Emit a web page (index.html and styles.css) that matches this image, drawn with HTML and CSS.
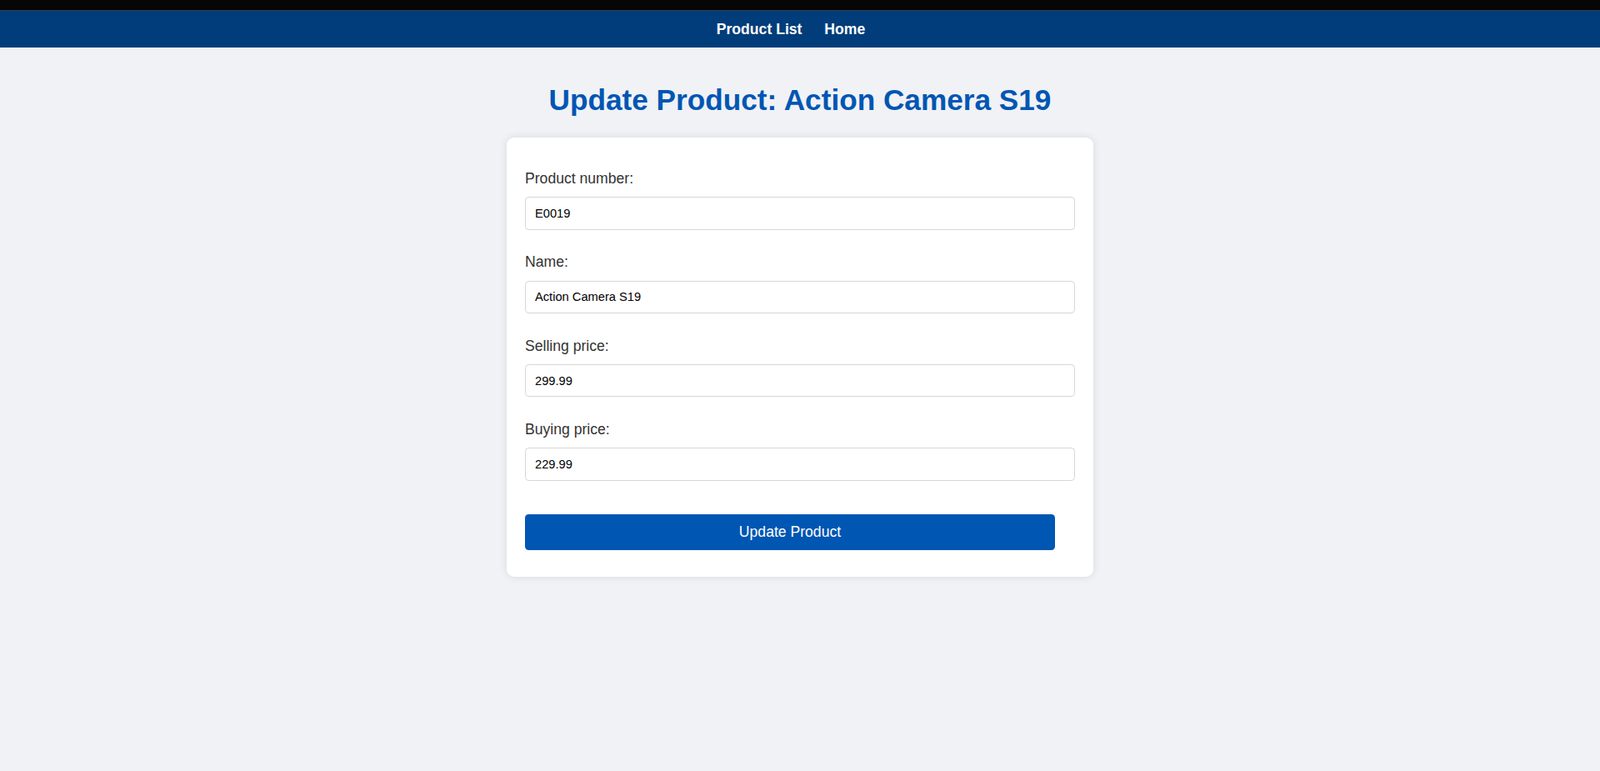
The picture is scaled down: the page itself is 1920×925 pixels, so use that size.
FILE: index.html
```html
<!DOCTYPE html>
<html lang="en">
<head>
<meta charset="utf-8">
<title>Update Product</title>
<link rel="stylesheet" href="styles.css">
</head>
<body>
<div class="topbar"></div>
<nav class="nav">
  <a class="nav-link" href="#">Product List</a>
  <a class="nav-link" href="#">Home</a>
</nav>
<main class="main">
  <h1 class="title">Update Product: Action Camera S19</h1>
  <div class="card">
    <form class="form">
      <div class="group">
        <label class="label" for="pn">Product number:</label>
        <input class="input" id="pn" type="text" value="E0019">
      </div>
      <div class="group">
        <label class="label" for="nm">Name:</label>
        <input class="input" id="nm" type="text" value="Action Camera S19">
      </div>
      <div class="group">
        <label class="label" for="sp">Selling price:</label>
        <input class="input" id="sp" type="text" value="299.99">
      </div>
      <div class="group">
        <label class="label" for="bp">Buying price:</label>
        <input class="input" id="bp" type="text" value="229.99">
      </div>
      <button class="button" type="button">Update Product</button>
    </form>
  </div>
</main>
</body>
</html>
```

FILE: styles.css
```css
html, body {
  margin: 0;
  padding: 0;
}
body {
  background: #f0f2f5;
  font-family: "Liberation Sans", Arial, sans-serif;
  font-size: 17.6px;
  color: #333;
  min-height: 925px;
}
.topbar {
  height: 12px;
  background: #060606;
  border-bottom: 1px solid #3a3a3a;
}
.nav {
  background: #003d7a;
  height: 44px;
  line-height: 44px;
  text-align: center;
}
.nav-link {
  color: #fff;
  font-weight: bold;
  text-decoration: none;
  margin-right: 22px;
}
.main {
  padding-top: 43px;
}
.title {
  margin: 0 0 24.7px;
  text-align: center;
  color: #0056b3;
  font-size: 35.2px;
  line-height: 40.4px;
  font-weight: bold;
}
.card {
  width: 704px;
  box-sizing: border-box;
  margin: 0 auto;
  background: #fff;
  border-radius: 9px;
  box-shadow: 0 0 11px rgba(0, 0, 0, 0.1);
  padding: 38.8px 22px 32px;
}
.form {
  display: flex;
  flex-direction: column;
  align-items: flex-start;
}
.group {
  width: 100%;
  margin-bottom: 28.6px;
}
.label {
  display: block;
  line-height: 20px;
  margin-bottom: 12.3px;
  color: #333;
}
.input {
  display: block;
  width: 100%;
  height: 39.5px;
  box-sizing: border-box;
  padding: 0 11px;
  border: 1px solid #d6d6d6;
  border-radius: 4.4px;
  font-family: "Liberation Sans", Arial, sans-serif;
  font-size: 14.67px;
  color: #000;
  background: #fff;
  outline: none;
}
.button {
  margin-top: 11.8px;
  width: 636px;
  height: 43px;
  border: none;
  border-radius: 4.4px;
  background: #0056b3;
  color: #fff;
  font-family: "Liberation Sans", Arial, sans-serif;
  font-size: 17.6px;
  cursor: pointer;
}
```
